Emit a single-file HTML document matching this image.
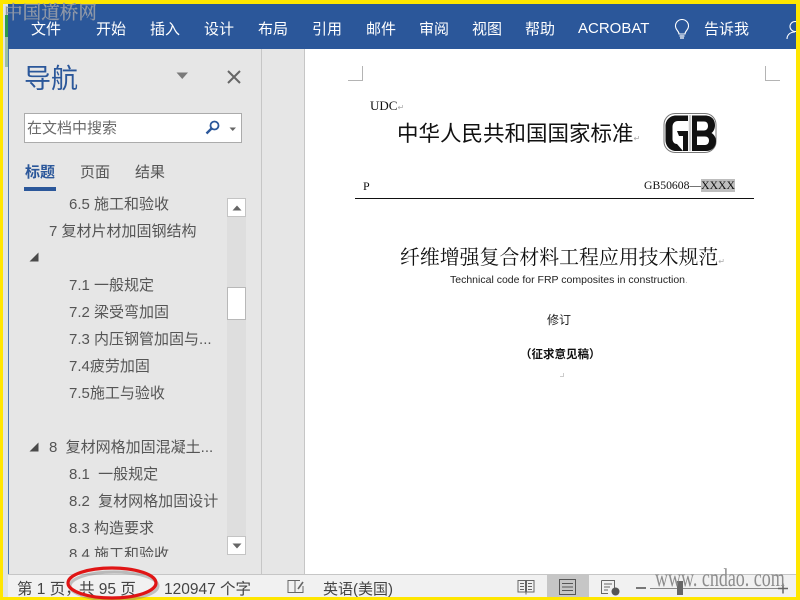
<!DOCTYPE html>
<html><head><meta charset="utf-8">
<style>
html,body{margin:0;padding:0;background:#fff}
#p{position:relative;width:800px;height:600px;overflow:hidden;background:#fff;font-family:"Liberation Sans","Noto Sans CJK SC",sans-serif}
.a{position:absolute;white-space:nowrap;line-height:1}
.r{position:absolute;}
.m{color:#fff;font-size:15px;top:22px}
.n{color:#555;font-size:15px}
.s{color:#444;font-size:15.500px;top:582px}
.d{font-family:"Liberation Serif","Noto Sans CJK SC",serif;color:#111}
.w{font-family:"Liberation Serif","Noto Serif CJK SC",serif;color:#8c8c8c}
</style></head><body><div id="p">
<!-- frame pieces -->
<div class="r" style="left:3px;top:4px;width:6px;height:596px;background:#e2e5e2"></div>
<div class="r" style="left:5px;top:15px;width:3px;height:22px;background:#2f9a4a"></div>
<div class="r" style="left:5px;top:37px;width:3px;height:30px;background:#9cbfa6"></div>
<div class="r" style="left:8px;top:4px;width:788px;height:45px;background:#2b579a"></div>
<div class="r" style="left:8px;top:49px;width:254px;height:525px;background:#e6e6e6;border-left:1px solid #4f78b0;box-sizing:border-box"></div>
<div class="r" style="left:261px;top:49px;width:1px;height:525px;background:#c6c6c6"></div>
<div class="r" style="left:262px;top:49px;width:42px;height:525px;background:#e6e6e6"></div>
<div class="r" style="left:304px;top:49px;width:1px;height:525px;background:#c6c6c6"></div>
<div class="r" style="left:8px;top:574px;width:788px;height:24px;background:#f1f1f1;border-top:1px solid #c6c6c6;box-sizing:border-box"></div>

<!-- ribbon -->
<div class="a m" style="left:31px">文件</div>
<div class="a m" style="left:96px">开始</div>
<div class="a m" style="left:150px">插入</div>
<div class="a m" style="left:204px">设计</div>
<div class="a m" style="left:258px">布局</div>
<div class="a m" style="left:312px">引用</div>
<div class="a m" style="left:366px">邮件</div>
<div class="a m" style="left:419px">审阅</div>
<div class="a m" style="left:472px">视图</div>
<div class="a m" style="left:525px">帮助</div>
<div class="a m" style="left:578px;font-size:15px;top:21px">ACROBAT</div>
<div class="a m" style="left:704px;top:22px">告诉我</div>
<svg class="r" style="left:672px;top:19px" width="20" height="22" viewBox="0 0 20 22" fill="none" stroke="#fff" stroke-width="1.1"><path d="M7 15C7 12 3.500 11 3.500 7a6.500 6.500 0 0 1 13 0c0 4-3.500 5-3.500 8z"/><path d="M7.500 17h5M8 19h4" stroke-width="1.300"/></svg>
<svg class="r" style="left:786px;top:20px" width="10" height="20" viewBox="0 0 10 20" fill="none" stroke="#fff" stroke-width="1.100"><circle cx="9" cy="6.500" r="5"/><path d="M1 19c0-4 3-7 8-7"/></svg>

<!-- nav header -->
<div class="a" style="left:24px;top:66px;font-size:27px;color:#2b579a">导航</div>
<svg class="r" style="left:176px;top:72px" width="13" height="8"><path d="M0.500 0.500H12L6.250 7z" fill="#7a7a7a"/></svg>
<svg class="r" style="left:226px;top:69px" width="16" height="16" fill="none" stroke="#666" stroke-width="2"><path d="M2 2L14 14M14 2L2 14"/></svg>
<div class="r" style="left:24px;top:113px;width:218px;height:30px;background:#fff;border:1px solid #ababab;box-sizing:border-box"></div>
<div class="a" style="left:27px;top:121px;font-size:15px;color:#6a6a6a">在文档中搜索</div>
<svg class="r" style="left:205px;top:120px" width="16" height="15" fill="none" stroke="#2b579a" stroke-width="1.800"><circle cx="9.500" cy="5.500" r="4"/><path d="M6.500 8.500L1.500 13.500" stroke-width="2.400"/></svg>
<svg class="r" style="left:229px;top:127px" width="8" height="5"><path d="M0.500 0.500H7L3.750 4z" fill="#666"/></svg>

<div class="a" style="left:25px;top:165px;font-size:15px;font-weight:bold;color:#2b579a">标题</div>
<div class="a" style="left:80px;top:165px;font-size:15px;color:#555">页面</div>
<div class="a" style="left:135px;top:165px;font-size:15px;color:#555">结果</div>
<div class="r" style="left:24px;top:187px;width:32px;height:4px;background:#2b579a"></div>

<!-- nav tree -->
<div class="a n" style="left:69px;top:197px">6.5 施工和验收</div>
<div class="a n" style="left:49px;top:224px">7 复材片材加固钢结构</div>
<svg class="r" style="left:29px;top:252px" width="10" height="10"><path d="M9.500 0.500V9.500H0.500z" fill="#4a4a4a"/></svg>
<div class="a n" style="left:69px;top:278px">7.1 一般规定</div>
<div class="a n" style="left:69px;top:305px">7.2 梁受弯加固</div>
<div class="a n" style="left:69px;top:332px">7.3 内压钢管加固与...</div>
<div class="a n" style="left:69px;top:359px">7.4疲劳加固</div>
<div class="a n" style="left:69px;top:386px">7.5施工与验收</div>
<svg class="r" style="left:29px;top:442px" width="10" height="10"><path d="M9.500 0.500V9.500H0.500z" fill="#4a4a4a"/></svg>
<div class="a n" style="left:49px;top:440px">8&nbsp; 复材网格加固混凝土...</div>
<div class="a n" style="left:69px;top:467px">8.1&nbsp; 一般规定</div>
<div class="a n" style="left:69px;top:494px">8.2&nbsp; 复材网格加固设计</div>
<div class="a n" style="left:69px;top:521px">8.3 构造要求</div>
<div style="position:absolute;left:10px;top:540px;width:215px;height:17px;overflow:hidden"><div class="a n" style="left:59px;top:7px">8.4 施工和验收</div></div>

<!-- scrollbar -->
<div class="r" style="left:227px;top:198px;width:19px;height:357px;background:#dedede"></div>
<div class="r" style="left:227px;top:198px;width:19px;height:19px;background:#fff;border:1px solid #c4c4c4;box-sizing:border-box"></div>
<svg class="r" style="left:232px;top:205px" width="10" height="6"><path d="M0.500 5.500H9.500L5 0.500z" fill="#666"/></svg>
<div class="r" style="left:227px;top:287px;width:19px;height:33px;background:#fff;border:1px solid #b8b8b8;box-sizing:border-box"></div>
<div class="r" style="left:227px;top:536px;width:19px;height:19px;background:#fff;border:1px solid #c4c4c4;box-sizing:border-box"></div>
<svg class="r" style="left:232px;top:543px" width="10" height="6"><path d="M0.500 0.500H9.500L5 5.500z" fill="#666"/></svg>

<!-- document -->
<svg class="r" style="left:345px;top:65px" width="445" height="17" fill="none" stroke="#b4b4b4"><path d="M3 15.500H17.500V1"/><path d="M420.500 1V15.500H435"/></svg>
<div class="a d" style="left:370px;top:99px;font-size:13px">UDC<span style="color:#aaa;font-size:8px">↵</span></div>
<div class="a" style="left:397px;top:124px;font-size:21.500px;color:#111">中华人民共和国国家标准<span style="color:#aaa;font-size:8px">↵</span></div>
<svg class="r" style="left:663px;top:112px" width="54" height="42" viewBox="0 0 54 42">
<rect x="1" y="1.500" width="52" height="39" rx="11" fill="#fff" stroke="#777" stroke-width="1"/>
<path d="M25 3.500H13C7 3.500 2.500 8 2.500 14V28C2.500 34 7 39 13 39H20L14 32C11.500 32 9.500 30 9.500 27V15C9.500 11 12 9 15 9H25z" fill="#111"/>
<path d="M14 19H25V39H20V24H16z" fill="#111"/>
<path d="M29 3.500H42C49 3.500 52 8 52 13C52 17 50.500 19.500 48.500 21C51 22.500 53 25.500 53 29C53 35 49 39 43 39H29V33H42C44.500 33 46 31 46 28.500C46 26 44.500 24.500 42 24.500H34V18.500H41C43.500 18.500 45 16.500 45 14C45 11 43.500 9.500 41 9.500H34V33H29z" fill="#111"/>
<path d="M27 3V39" stroke="#ccc" stroke-width="2.500"/>
</svg>
<div class="a d" style="left:363px;top:180px;font-size:12px">P</div>
<div class="a d" style="left:644px;top:180px;font-size:11.700px">GB50608—<span style="background:#bdbdbd">XXXX</span></div>
<div class="r" style="left:355px;top:198px;width:399px;height:1px;background:#111"></div>
<div class="a" style="left:400px;top:246px;font-size:19.900px;color:#111;font-family:'Noto Serif CJK SC','Liberation Serif',serif">纤维增强复合材料工程应用技术规范<span style="color:#aaa;font-size:8px">↵</span></div>
<div class="a" style="left:450px;top:275px;font-size:10.500px;color:#222">Technical code for FRP composites in construction<span style="color:#bbb">.</span></div>
<div class="a" style="left:547px;top:314px;font-size:12px;color:#222">修订</div>
<div class="a" style="left:520px;top:350px;font-size:11.500px;font-weight:bold;color:#111">（征求意见稿）</div>
<div class="r" style="left:560px;top:373px;width:3px;height:3px;border-right:1px solid #ccc;border-bottom:1px solid #ccc"></div>

<!-- status bar -->
<div class="a s" style="left:17px">第 1 页，</div>
<div class="a s" style="left:79px">共 95 页</div>
<div class="a s" style="left:164px">120947 个字</div>
<svg class="r" style="left:287px;top:579px" width="18" height="15" fill="none" stroke="#666"><path d="M1 1.500H8V13.500H1zM8 13.500H16V7M8 1.500H13"/><path d="M11 10L16 3" stroke-width="1.600"/></svg>
<div class="a s" style="left:323px;font-size:15px">英语(美国)</div>
<svg class="r" style="left:517px;top:579px" width="18" height="16" fill="none" stroke="#666"><path d="M1 1.500H8.500V13H1zM9.500 1.500H17V13H9.500zM3 4.500H7M3 7.500H7M3 10.500H7M11 4.500H15M11 7.500H15M11 10.500H15M9 13V15.500"/></svg>
<div class="r" style="left:547px;top:575px;width:42px;height:22px;background:#c6c6c6"></div>
<svg class="r" style="left:559px;top:579px" width="18" height="16" fill="none" stroke="#555"><path d="M0.500 0.500H16.500V15.500H0.500zM3 4.500H14M3 8H14M3 11.500H14"/></svg>
<svg class="r" style="left:601px;top:580px" width="20" height="16" fill="none" stroke="#666"><path d="M0.500 0.500H13.500V9M0.500 0.500V13.500H7M3 4H11M3 7H9M3 10H7"/><circle cx="14.500" cy="11.500" r="4" fill="#555" stroke="none"/></svg>
<div class="r" style="left:636px;top:587px;width:10px;height:2px;background:#777"></div>
<div class="r" style="left:650px;top:588px;width:128px;height:1px;background:#888"></div>
<div class="r" style="left:677px;top:581px;width:6px;height:14px;background:#666"></div>
<svg class="r" style="left:778px;top:583px" width="11" height="11"><path d="M0 5.500H10M5 0.500V10.500" stroke="#666" stroke-width="1.500"/></svg>

<!-- yellow frame -->
<div class="r" style="left:0;top:0;width:800px;height:4px;background:#ffe600"></div>
<div class="r" style="left:0;top:0;width:3px;height:600px;background:#ffe600"></div>
<div class="r" style="left:796px;top:0;width:4px;height:600px;background:#ffe600"></div>
<div class="r" style="left:0;top:597px;width:800px;height:3px;background:#ffe600"></div>

<!-- watermarks -->
<div class="a" style="left:4px;top:3px;font-size:18.600px;color:#8f98a8;font-family:'Noto Serif CJK SC','Liberation Serif',serif;-webkit-text-stroke:.3px #8f98a8">中国道桥网</div>
<div class="a w" style="left:655px;top:566px;font-size:25px;transform:scaleX(.72);transform-origin:left top">www. cndao. com</div>

<!-- red circle -->
<svg class="r" style="left:60px;top:560px" width="110" height="40" fill="none">
<ellipse cx="54" cy="26" rx="44" ry="14" stroke="#777" stroke-width="3" opacity=".4"/>
<ellipse cx="52" cy="23" rx="44" ry="15" stroke="#e01515" stroke-width="3.200"/>
</svg>
</div></body></html>
